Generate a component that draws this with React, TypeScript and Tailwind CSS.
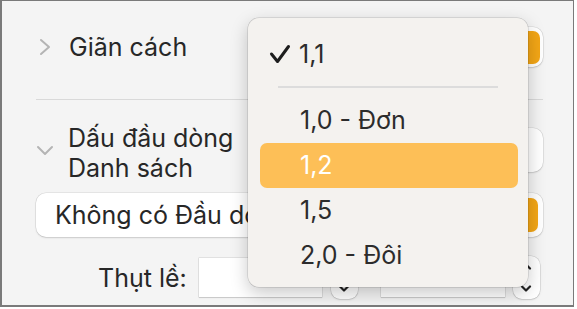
import React from "react";

function PopButton({ className = "", orange = true, orangeClass = "" }: { className?: string; orange?: boolean; orangeClass?: string }) {
  return (
    <div
      className={`flex items-center justify-end bg-white rounded-[10px] shadow-[0_0_0_0.5px_rgba(0,0,0,0.12),0_1px_2px_rgba(0,0,0,0.12)] ${className}`}
    >
      {orange && <div className={`bg-[#f3a616] rounded-[7px] ${orangeClass}`} />}
    </div>
  );
}

function Stepper({ showUp = true }: { showUp?: boolean }) {
  return (
    <div className="w-[27px] h-[43px] bg-white rounded-[9px] shadow-[0_0_0_0.5px_rgba(0,0,0,0.14),0_1px_2px_rgba(0,0,0,0.12)] flex flex-col items-center justify-between py-[6px]">
      <svg width="12" height="8" viewBox="0 0 12 8" className={showUp ? "" : "opacity-0"}>
        <path d="M2 6.5 L6 2.5 L10 6.5" fill="none" stroke="#222" strokeWidth="2.2" strokeLinecap="round" strokeLinejoin="round" />
      </svg>
      <svg width="12" height="8" viewBox="0 0 12 8">
        <path d="M2 1.5 L6 5.5 L10 1.5" fill="none" stroke="#222" strokeWidth="2.2" strokeLinecap="round" strokeLinejoin="round" />
      </svg>
    </div>
  );
}

export default function App() {
  return (
    <div className="w-[577px] h-[309px] bg-white font-['Inter','Liberation_Sans',sans-serif] text-[#272727]">
      <div className="relative w-[574px] h-[307px] border-t border-r border-l-2 border-b-2 border-[#7a7a7a] bg-[#f4f4f4] overflow-hidden">
        <div className="pl-[34px] pr-[30px] pt-[26px] flex flex-col">
          {/* Row 1 */}
          <div className="flex items-center h-[40px]">
            <svg width="14" height="18" viewBox="0 0 14 18" className="ml-[2px] shrink-0">
              <path d="M3 2 L11 9 L3 16" fill="none" stroke="#b4b4b4" strokeWidth="2" strokeLinecap="round" strokeLinejoin="round" />
            </svg>
            <span className="ml-[17px] text-[25px] leading-[30px]">Giãn cách</span>
            <div className="flex-1" />
            <PopButton className="w-[180px] h-[40px] pr-[3px]" orangeClass="w-[24px] h-[33px]" />
          </div>

          {/* Divider */}
          <div className="mt-[32px] h-px bg-[#d9d9d9]" />

          {/* Row 2 */}
          <div className="flex items-start mt-[23px]">
            <svg width="18" height="12" viewBox="0 0 18 12" className="mt-[22px] shrink-0">
              <path d="M2 2 L9 9 L16 2" fill="none" stroke="#b4b4b4" strokeWidth="2" strokeLinecap="round" strokeLinejoin="round" />
            </svg>
            <div className="ml-[14px] text-[25px] leading-[30px]">
              <div>Dấu đầu dòng</div>
              <div>Danh sách</div>
            </div>
            <div className="flex-1" />
            <PopButton className="w-[200px] h-[44px] mt-[5px]" orange={false} />
          </div>

          {/* Row 3 */}
          <div className="mt-[10px]">
            <div className="flex items-center h-[44px] bg-white rounded-[10px] shadow-[0_0_0_0.5px_rgba(0,0,0,0.12),0_1px_2px_rgba(0,0,0,0.12)] pl-[19px] pr-[5px]">
              <span className="text-[25px] leading-[30px] whitespace-nowrap">Không có Đầu dòng</span>
              <div className="flex-1" />
              <div className="w-[22px] h-[34px] bg-[#f3a616] rounded-[7px]" />
            </div>
          </div>

          {/* Row 4 */}
          <div className="flex items-center mt-[19px] h-[43px]">
            <span className="ml-[62px] text-[25px] leading-[30px] whitespace-nowrap">Thụt lề:</span>
            <div className="ml-[12px] w-[123px] h-[39px] bg-white shadow-[0_0_0_0.5px_rgba(0,0,0,0.15),0_1px_1px_rgba(0,0,0,0.1)]" />
            <div className="ml-[9px]">
              <Stepper showUp={false} />
            </div>
            <div className="ml-[23px] w-[124px] h-[39px] bg-white shadow-[0_0_0_0.5px_rgba(0,0,0,0.15),0_1px_1px_rgba(0,0,0,0.1)]" />
            <div className="ml-[8px]">
              <Stepper />
            </div>
          </div>
        </div>

        {/* Popup menu overlay */}
        <div className="absolute left-[246px] top-[17px] w-[280px] h-[269px] bg-[#f4f2ef] rounded-[11px] shadow-[0_0_0_0.5px_rgba(0,0,0,0.18),0_6px_18px_rgba(0,0,0,0.22)] pt-[14px] pl-[12px] pr-[10px] flex flex-col text-[25px] text-[#2c2c2c]">
          <div className="h-[44px] flex items-center">
            <svg width="22" height="20" viewBox="0 0 22 20" className="ml-[9px] shrink-0">
              <path d="M2.5 10 L8.5 17.5 L19.5 2.5" fill="none" stroke="#1d1d1d" strokeWidth="3" strokeLinecap="round" strokeLinejoin="round" />
            </svg>
            <span className="ml-[8px] leading-[30px]">1,1</span>
          </div>
          <div className="h-[22px] flex items-center pl-[18px] pr-[20px]">
            <div className="h-[2px] w-full bg-[#dcdcdc]" />
          </div>
          <div className="h-[45px] flex items-center pl-[40px]">1,0 - Đơn</div>
          <div className="h-[45px] flex items-center pl-[40px] bg-[#fdbf57] rounded-[7px] text-white">1,2</div>
          <div className="h-[45px] flex items-center pl-[40px]">1,5</div>
          <div className="h-[45px] flex items-center pl-[40px]">2,0 - Đôi</div>
        </div>
      </div>
    </div>
  );
}
